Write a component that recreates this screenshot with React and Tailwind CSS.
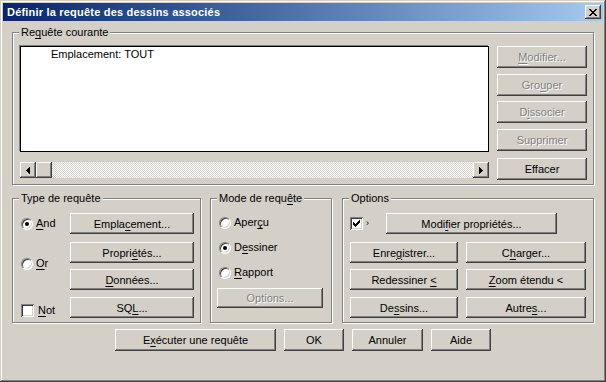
import React from 'react';

const raised =
  'shadow-[inset_-1px_-1px_#404040,inset_1px_1px_#ffffff,inset_-2px_-2px_#808080,inset_2px_2px_#d4d0c8]';
const sunken =
  'shadow-[inset_1px_1px_#808080,inset_-1px_-1px_#ffffff,inset_2px_2px_#404040,inset_-2px_-2px_#d4d0c8]';

function Btn({ className = '', disabled, children }) {
  return (
    <div
      className={`flex items-center justify-center bg-[#d4d0c8] ${raised} ${
        disabled ? 'text-[#808080] [text-shadow:1px_1px_0_#ffffff]' : 'text-black'
      } ${className}`}
    >
      <span className="pt-[1px]">{children}</span>
    </div>
  );
}

function U({ children }) {
  return <u className="underline underline-offset-[2px]">{children}</u>;
}

function Group({ label, className = '', children }) {
  return (
    <div
      className={`relative border border-[#808080] shadow-[1px_1px_0_#ffffff,inset_1px_1px_0_#ffffff] ${className}`}
    >
      <span className="absolute -top-[7px] left-[6px] bg-[#d4d0c8] px-[2px] leading-[13px]">{label}</span>
      {children}
    </div>
  );
}

function Radio({ checked, children, className = '' }) {
  return (
    <div className={`flex items-center ${className}`}>
      <div className="relative w-[12px] h-[12px] rounded-full bg-white border border-t-[#808080] border-l-[#808080] border-b-white border-r-white shadow-[inset_1px_1px_0_#404040,inset_-1px_-1px_0_#d4d0c8] flex items-center justify-center">
        {checked && <div className="w-[4px] h-[4px] rounded-full bg-black" />}
      </div>
      <span className="ml-[3px]">{children}</span>
    </div>
  );
}

function Check({ checked, children, className = '' }) {
  return (
    <div className={`flex items-center ${className}`}>
      <div className={`w-[13px] h-[13px] bg-white ${sunken} flex items-center justify-center`}>
        {checked && (
          <svg width="7" height="7" viewBox="0 0 7 7" shapeRendering="crispEdges">
            <rect x="6" y="0" width="1" height="1" />
            <rect x="5" y="1" width="2" height="1" />
            <rect x="0" y="2" width="1" height="1" />
            <rect x="4" y="2" width="3" height="1" />
            <rect x="0" y="3" width="2" height="1" />
            <rect x="3" y="3" width="3" height="1" />
            <rect x="0" y="4" width="5" height="1" />
            <rect x="1" y="5" width="3" height="1" />
            <rect x="2" y="6" width="1" height="1" />
          </svg>
        )}
      </div>
      {children && <span className="ml-[4px]">{children}</span>}
    </div>
  );
}

function Arrow({ dir }) {
  return (
    <div className={`w-[16px] h-[16px] bg-[#d4d0c8] ${raised} flex items-center justify-center`}>
      <svg width="4" height="7" viewBox="0 0 4 7" shapeRendering="crispEdges">
        {dir === 'left' ? (
          <path d="M0 3.5 L4 0 L4 7 Z" fill="black" />
        ) : (
          <path d="M4 3.5 L0 0 L0 7 Z" fill="black" />
        )}
      </svg>
    </div>
  );
}

export default function App() {
  return (
    <div className="w-[606px] h-[382px] p-[3px] flex flex-col bg-[#d4d0c8] text-black text-[11px] leading-[13px] font-['Liberation_Sans',Arial,sans-serif] shadow-[inset_-1px_-1px_#404040,inset_1px_1px_#d4d0c8,inset_-2px_-2px_#808080,inset_2px_2px_#ffffff]">
      {/* Title bar */}
      <div className="h-[18px] flex items-center bg-gradient-to-r from-[#0a246a] to-[#a6caf0]">
        <span className="pl-[4px] text-white font-bold tracking-[0.2px]">Définir la requête des dessins associés</span>
        <div className={`ml-auto mr-[2px] w-[16px] h-[14px] bg-[#d4d0c8] ${raised} flex items-center justify-center`}>
          <svg width="8" height="7" viewBox="0 0 8 7" shapeRendering="crispEdges">
            <rect x="0" y="0" width="2" height="1" />
            <rect x="6" y="0" width="2" height="1" />
            <rect x="1" y="1" width="2" height="1" />
            <rect x="5" y="1" width="2" height="1" />
            <rect x="2" y="2" width="4" height="1" />
            <rect x="3" y="3" width="2" height="1" />
            <rect x="2" y="4" width="4" height="1" />
            <rect x="1" y="5" width="2" height="1" />
            <rect x="5" y="5" width="2" height="1" />
            <rect x="0" y="6" width="2" height="1" />
            <rect x="6" y="6" width="2" height="1" />
          </svg>
        </div>
      </div>

      {/* Requête courante */}
      <Group
        label={<>Re<U>q</U>uête courante</>}
        className="mt-[11px] ml-[9px] w-[582px] h-[153px]"
      >
        <div className="flex pl-[7px] pt-[13px]">
          <div className="flex flex-col">
            <div className="w-[469px] h-[106px] bg-white border border-black shadow-[-1px_-1px_0_#808080] pl-[30px] pt-[1px]">
              Emplacement: TOUT
            </div>
            <div className="mt-[10px] w-[469px] h-[16px] flex bg-[repeating-conic-gradient(#ffffff_0_25%,#d4d0c8_0_50%)] bg-[length:2px_2px]">
              <Arrow dir="left" />
              <div className={`w-[16px] h-[16px] bg-[#d4d0c8] ${raised}`} />
              <div className="flex-1" />
              <Arrow dir="right" />
            </div>
          </div>
          <div className="ml-[8px] w-[90px] flex flex-col">
            <Btn disabled className="h-[22px]"><U>M</U>odifier...</Btn>
            <Btn disabled className="h-[22px] mt-[6px]">Gro<U>u</U>per</Btn>
            <Btn disabled className="h-[22px] mt-[5px]">D<U>i</U>ssocier</Btn>
            <Btn disabled className="h-[22px] mt-[6px]">Supprimer</Btn>
            <Btn className="h-[22px] mt-[7px]">Effacer</Btn>
          </div>
        </div>
      </Group>

      {/* Lower groups */}
      <div className="flex mt-[13px]">
        <Group label="Type de requête" className="ml-[9px] w-[189px] h-[125px]">
          <div className="flex pl-[8px] pt-[14px]">
            <div className="w-[49px] flex flex-col">
              <Radio checked className="h-[21px]"><U>A</U>nd</Radio>
              <Radio className="h-[21px] mt-[19px]"><U>O</U>r</Radio>
              <Check className="h-[21px] mt-[26px]"><U>N</U>ot</Check>
            </div>
            <div className="w-[124px] flex flex-col">
              <Btn className="h-[21px]">Empla<U>c</U>ement...</Btn>
              <Btn className="h-[21px] mt-[8px]">Propri<U>é</U>tés...</Btn>
              <Btn className="h-[21px] mt-[6px]"><U>D</U>onnées...</Btn>
              <Btn className="h-[21px] mt-[7px]">SQ<U>L</U>...</Btn>
            </div>
          </div>
        </Group>

        <Group label={<>Mode de requ<U>ê</U>te</>} className="ml-[9px] w-[122px] h-[125px]">
          <div className="flex flex-col pt-[13px]">
            <Radio className="h-[21px] pl-[8px]">Aper<U>ç</U>u</Radio>
            <Radio checked className="h-[21px] mt-[4px] pl-[8px]">D<U>e</U>ssiner</Radio>
            <Radio className="h-[21px] mt-[4px] pl-[8px]"><U>R</U>apport</Radio>
            <Btn disabled className="h-[20px] w-[106px] mt-[5px] ml-[6px]">Options...</Btn>
          </div>
        </Group>

        <Group label="Options" className="ml-[10px] w-[252px] h-[125px]">
          <div className="flex flex-col pl-[7px] pt-[14px]">
            <div className="flex items-center h-[21px]">
              <Check checked />
              <span className="w-[23px] pl-[3px] text-[9px]">›</span>
              <Btn className="h-[21px] w-[171px]">Modi<U>f</U>ier propriétés...</Btn>
            </div>
            <div className="flex mt-[8px] gap-[8px]">
              <Btn className="h-[21px] w-[108px]">Enre<U>g</U>istrer...</Btn>
              <Btn className="h-[21px] w-[120px]">C<U>h</U>arger...</Btn>
            </div>
            <div className="flex mt-[6px] gap-[8px]">
              <Btn className="h-[21px] w-[108px]">Redessiner <U>&lt;</U></Btn>
              <Btn className="h-[21px] w-[120px]"><U>Z</U>oom étendu &lt;</Btn>
            </div>
            <div className="flex mt-[7px] gap-[8px]">
              <Btn className="h-[21px] w-[108px]">De<U>s</U>sins...</Btn>
              <Btn className="h-[21px] w-[120px]">Autre<U>s</U>...</Btn>
            </div>
          </div>
        </Group>
      </div>

      {/* Bottom buttons */}
      <div className="flex justify-center gap-[8px] mt-[6px]">
        <Btn className="h-[22px] w-[161px]">E<U>x</U>écuter une requête</Btn>
        <Btn className="h-[22px] w-[60px]">OK</Btn>
        <Btn className="h-[22px] w-[71px]">Annuler</Btn>
        <Btn className="h-[22px] w-[60px]">Aide</Btn>
      </div>
    </div>
  );
}
